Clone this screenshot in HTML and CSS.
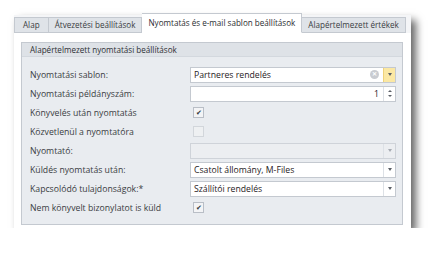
FILE: index.html
```html
<!DOCTYPE html>
<html lang="hu">

<head>
    <meta charset="UTF-8">
    <title>Nyomtatás és e-mail sablon beállítások</title>
    <link rel="stylesheet" href="styles.css">
</head>

<body>
    <div class="window">
        <div class="tabs">
            <div class="tab first">Alap</div>
            <div class="tab">Átvezetési beállítások</div>
            <div class="tab active">Nyomtatás és e-mail sablon beállítások</div>
            <div class="tab">Alapértelmezett értékek</div>
        </div>

        <div class="page">
            <div class="group">
                <div class="group-header">Alapértelmezett nyomtatási beállítások</div>

                <div class="form">
                    <div class="label">Nyomtatási sablon:</div>
                    <div class="control">
                        <div class="field">
                            <span class="value">Partneres rendelés</span>
                            <span class="clear">&#x2715;</span>
                            <span class="drop hot"><i class="arrow"></i></span>
                        </div>
                    </div>

                    <div class="label">Nyomtatási példányszám:</div>
                    <div class="control">
                        <div class="field">
                            <span class="value num">1</span>
                            <span class="spin"><i class="up"></i><i class="down"></i></span>
                        </div>
                    </div>

                    <div class="label">Könyvelés után nyomtatás</div>
                    <div class="control">
                        <span class="check checked">&#x2714;</span>
                    </div>

                    <div class="label">Közvetlenül a nyomtatóra</div>
                    <div class="control">
                        <span class="check disabled"></span>
                    </div>

                    <div class="label">Nyomtató:</div>
                    <div class="control">
                        <div class="field disabled">
                            <span class="value"></span>
                            <span class="drop"><i class="arrow"></i></span>
                        </div>
                    </div>

                    <div class="label">Küldés nyomtatás után:</div>
                    <div class="control">
                        <div class="field">
                            <span class="value">Csatolt állomány, M-Files</span>
                            <span class="drop"><i class="arrow"></i></span>
                        </div>
                    </div>

                    <div class="label">Kapcsolódó tulajdonságok:*</div>
                    <div class="control">
                        <div class="field">
                            <span class="value">Szállítói rendelés</span>
                            <span class="drop"><i class="arrow"></i></span>
                        </div>
                    </div>

                    <div class="label">Nem könyvelt bizonylatot is küld</div>
                    <div class="control">
                        <span class="check checked">&#x2714;</span>
                    </div>
                </div>
            </div>
        </div>
    </div>
</body>

</html>
```

FILE: styles.css
```css
:root {
    --text: #3a3d42;
    --border: #c4c9d0;
    --group: #e9ecf0;
    --header: #dee2e7;
    --tab: #dfe3e8;
}

body {
    margin: 0;
    padding: 15px 30px 0 14px;
    background-color: #ffffff;
    font-family: 'Open Sans', sans-serif;
    font-size: 8.7px;
    color: var(--text);
}

.window {
    width: 397px;
    background-color: #ffffff;
    box-shadow: 5px 5px 8px rgba(0, 0, 0, 0.6);
}

.tabs {
    display: flex;
    align-items: flex-end;
    height: 18px;
    background-color: #f4f5f7;
    font-size: 8.1px;
}

.tab {
    height: 14px;
    line-height: 14px;
    padding: 0 6px;
    background-color: var(--tab);
    border: 1px solid var(--border);
    border-left: none;
    white-space: nowrap;
}

.tab.first {
    padding: 0 8px;
    border-left: 1px solid var(--border);
}

.tab.active {
    height: 18px;
    line-height: 18px;
    padding: 0 6px;
    background-color: #ffffff;
    border-bottom-color: #ffffff;
    color: #2b2d31;
}

.page {
    padding: 9px 8px 3px 7px;
}

.group {
    background-color: var(--group);
    border: 1px solid var(--border);
    height: 181px;
}

.group-header {
    height: 13px;
    line-height: 13px;
    padding-left: 8px;
    background-color: var(--header);
    border-bottom: 1px solid #d3d8de;
    color: #2e3035;
    font-size: 8.1px;
}

.form {
    display: grid;
    grid-template-columns: 160px 1fr;
    grid-auto-rows: 19px;
    padding: 8px 6px 0 8px;
}

.label {
    display: flex;
    align-items: center;
    white-space: nowrap;
}

.control {
    display: flex;
    align-items: center;
}

.field {
    flex: 1;
    display: flex;
    align-items: center;
    height: 14px;
    background-color: #ffffff;
    border: 1px solid var(--border);
    color: #1f2124;
}

.field.disabled {
    background-color: #eceef1;
    border-color: #cfd3d9;
}

.value {
    flex: 1;
    padding-left: 3px;
    white-space: nowrap;
}

.value.num {
    text-align: right;
    padding-right: 4px;
}

.clear {
    width: 9px;
    height: 9px;
    margin-right: 4px;
    border-radius: 50%;
    background-color: #c9ccd1;
    color: #ffffff;
    font-size: 6px;
    line-height: 9px;
    text-align: center;
    font-weight: bold;
}

.drop {
    width: 11px;
    height: 14px;
    display: flex;
    align-items: center;
    justify-content: center;
    border-left: 1px solid #dde1e6;
}

.drop.hot {
    background-color: #fbe8a4;
    border-left-color: #efd27a;
}

.arrow {
    width: 0;
    height: 0;
    border-left: 2.5px solid transparent;
    border-right: 2.5px solid transparent;
    border-top: 3px solid #5b5f66;
}

.field.disabled .arrow {
    border-top-color: #a7acb3;
}

.spin {
    width: 11px;
    height: 14px;
    display: flex;
    flex-direction: column;
    align-items: center;
    justify-content: center;
    gap: 3px;
    border-left: 1px solid #dde1e6;
}

.spin .up,
.spin .down {
    width: 0;
    height: 0;
    border-left: 2px solid transparent;
    border-right: 2px solid transparent;
}

.spin .up {
    border-bottom: 2px solid #5b5f66;
}

.spin .down {
    border-top: 2px solid #5b5f66;
}

.check {
    width: 9px;
    height: 9px;
    margin-left: 3px;
    border: 1px solid #b9bec6;
    background-color: #f3f4f6;
    font-size: 7px;
    line-height: 9px;
    text-align: center;
    color: #30343a;
}

.check.disabled {
    border-color: #d2d6db;
    background-color: #eef0f2;
}
```
